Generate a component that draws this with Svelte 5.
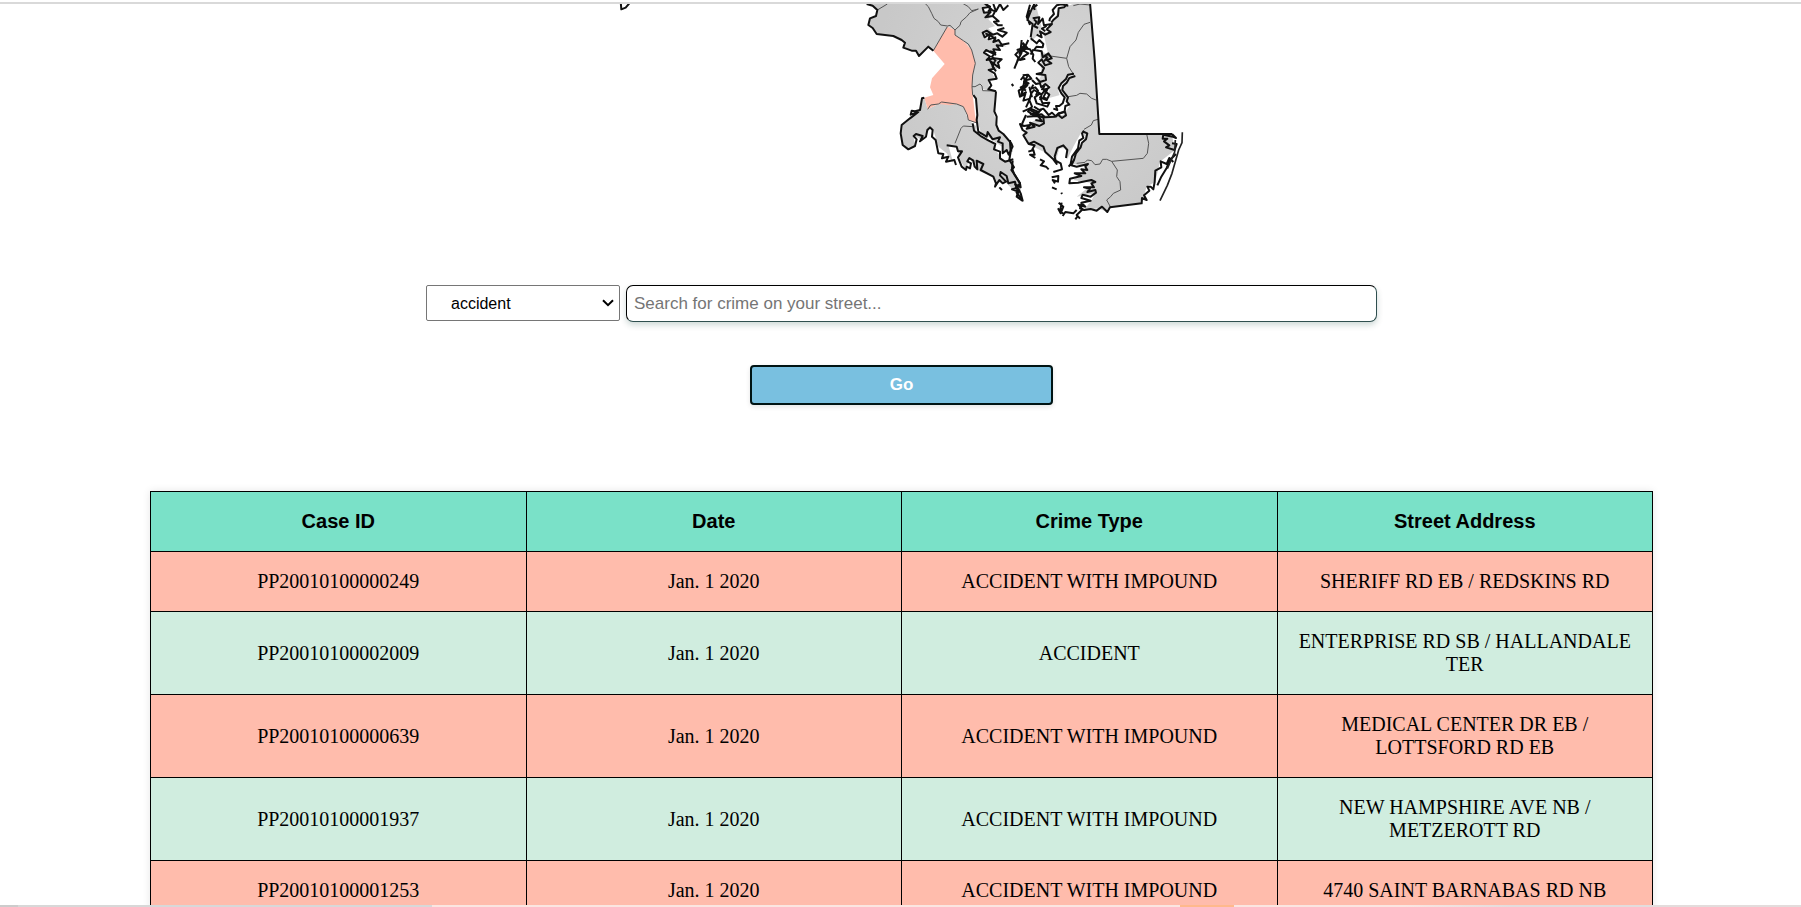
<script>
  const types = ['accident', 'assault', 'robbery', 'theft', 'vandalism'];
  const columns = ['Case ID', 'Date', 'Crime Type', 'Street Address'];
  const rows = [
    ['PP20010100000249', 'Jan. 1 2020', 'ACCIDENT WITH IMPOUND', 'SHERIFF RD EB / REDSKINS RD'],
    ['PP20010100002009', 'Jan. 1 2020', 'ACCIDENT', 'ENTERPRISE RD SB / HALLANDALE TER'],
    ['PP20010100000639', 'Jan. 1 2020', 'ACCIDENT WITH IMPOUND', 'MEDICAL CENTER DR EB / LOTTSFORD RD EB'],
    ['PP20010100001937', 'Jan. 1 2020', 'ACCIDENT WITH IMPOUND', 'NEW HAMPSHIRE AVE NB / METZEROTT RD'],
    ['PP20010100001253', 'Jan. 1 2020', 'ACCIDENT WITH IMPOUND', '4740 SAINT BARNABAS RD NB']
  ];
  let type = $state('accident');
  let street = $state('');
</script>

<div class="page">
  <div class="rule"></div>
  <main>
    <svg class="map" viewBox="-723 12 1695 678" aria-hidden="true">
      <defs>
        <radialGradient id="land" gradientUnits="userSpaceOnUse" cx="560" cy="240" r="520">
          <stop offset="0" stop-color="#d6d6d6" />
          <stop offset="1" stop-color="#c8c8c8" />
        </radialGradient>
      </defs>
      <!-- mainland counties -->
      <path class="fill" d="M20 5L38 17L52 30L48 48L30 55L25 75L38 84L50 102L100 108L125 120L135 128L130 143L155 152L168 152L177 168L205 140L220 152L262 80L285 90L285 105L310 122L335 150L346 190L338 225L336 260L388 272L385 240L405 235L390 210L410 210L415 180L385 175L372 155L415 150L410 135L440 140L420 125L375 115L368 100L405 105L385 85L405 78L385 58L400 45L375 40L370 20L395 5Z" />
      <path class="fill" d="M336 260L360 252L368 272L405 273L403 345L410 375L418 390L450 425L456 440L446 457L430 455L426 440L405 425L390 415L375 405L362 395L351 360L350 300L340 285Z" />
      <path class="fill" d="M193 293L203 328L235 312L290 312L310 320L325 360L348 378L350 395L380 420L405 435L410 455L430 480L458 482L456 505L470 530L480 550L486 600L460 570L435 545L405 550L400 530L355 512L328 475L318 510L300 480L290 440L265 435L280 490L260 460L235 440L220 390L212 382L200 400L185 420L160 405L165 435L145 448L128 435L122 400L125 375L150 350L180 330L185 295Z" />
      <path class="pink" d="M220 152L262 80L285 90L285 105L310 122L335 150L346 190L338 225L336 260L338 285L340 300L345 345L350 370L325 360L322 345L310 320L290 312L270 316L235 312L203 328L193 293L220 285L210 262L216 235L254 192Z" />
      <!-- eastern shore -->
      <path class="fill" d="M525 5L502 60L518 72L512 125L545 95L568 80L577 55L600 12L690 5L704 180L718 402L935 402L945 450L900 485L886 545L860 560L845 610L750 622L740 635L715 625L670 632L695 600L705 580L650 590L700 550L640 540L675 510L680 500L630 490L660 450L675 410L665 395L640 440L622 478L618 445L598 445L590 475L540 450L500 430L490 400L510 370L550 345L610 345L630 315L600 285L565 295L570 255L530 250L545 225L540 150L565 165L555 120Z" />
      <path class="water" d="M600 8L640 12L595 27L588 48L540 92L565 98L570 60L578 35ZM642 222L610 250L600 275L624 310L612 342L590 342L606 310L594 270L606 243L635 222Z" />
      <!-- county boundaries -->
      <path class="border" d="M52 30L82 12M190 5L205 20L215 40L222 55L235 65L242 75L262 78L270 76L285 90L300 76L303 65L320 50L330 38L355 27L335 32L325 20L308 10M285 90L285 105L310 122L325 132L335 150L346 190L338 225L336 260L338 285M220 152L262 80M336 260L345 260L360 252L366 258L368 272L405 273M203 328L212 315L235 312L245 306L290 312L310 320L322 345L325 360L348 368M285 430L303 385L310 378L338 380M690 67L672 73L655 97L648 120L630 140L620 175L626 200L640 222M550 165L585 170L620 175M625 290L650 286L660 280L680 282L695 295L708 300M714 358L700 362L694 375L672 388M860 402L866 430L862 460L850 475L755 484M650 490L675 487L682 480L695 482L705 494L720 492L728 478L740 478L755 484L772 510L770 530L780 545L782 570L760 580L752 590L740 600L752 622M640 17L660 12L690 15" />
      <!-- coastlines -->
      <path class="coast" d="M-718 4L-716 28L-703 23L-692 10M20 12L38 17L52 30L48 48L30 55L25 75L38 84L50 102L100 108L125 120L135 128L130 143L155 152L168 152L177 168L205 140L220 152M193 293L186 295L180 330L165 334L155 332L152 344L175 336L150 355L125 375L122 400L128 435L145 448L165 438L170 418L161 408L168 402L188 408L180 424L198 410L202 390L210 382L218 390L216 410L227 420L235 460L250 462L246 475L265 470L258 485L283 480L288 495M260 436L290 440L294 454L306 454L294 472L305 500L318 510L320 500L330 505L333 490L322 484L328 474L340 482L344 500L352 508L350 482L370 492L362 510L400 530L408 550L405 560L418 540L428 550L438 545L420 526L422 516L440 528L445 550L465 545L470 565L456 568L475 575L470 590L487 602M458 482L456 505L464 525L480 550L482 562L465 552L476 575" />
      <path class="coast" d="M340 285L348 296L352 345L350 360L355 395L380 410L383 396L398 418L420 412L414 425L428 430L428 460L440 450L446 464L458 440L454 430L430 402L416 392L409 375L410 350L403 334L406 300L408 274M338 370L342 392L365 410L386 422L406 432L402 448L420 455L420 475L435 485L460 478" />
      <path class="coast" d="M370 8L390 20L368 24L372 38L392 36L376 52L398 48L416 64L402 65L414 76L428 76M400 12L408 34L420 12L430 30L445 16M386 26L405 34L398 48M433 84L414 90L440 98L427 110L412 100L398 104L380 92L368 98L374 112L390 102L386 118L406 112L400 126L416 120L425 134L448 130M430 138L410 136L420 150L400 148L406 164L378 150L372 158L390 170L380 180L402 175L425 178L414 188L418 204L390 182L402 206L386 210L404 220L410 236L386 240L394 256L385 268L408 274" />
      <path class="coast" d="M510 14L500 50L510 75M485 120L482 148L466 164L476 174L463 206M488 128L502 144L488 150L505 160L490 170L480 180L496 176M525 8L514 30L502 60L518 72L512 112M532 14L522 22L524 30M518 55L538 52L534 72L548 56L552 76L576 72L560 88L572 96L556 104L540 94L545 112L530 104M512 115L530 130L538 120L550 132L548 142L530 140L522 150L545 154L548 172L565 160L575 175L560 180L574 190L555 196L545 178L535 188L552 204L546 218L530 222L556 225L558 240L540 246L528 232" />
      <path class="coast" d="M625 17L604 13L590 16L578 30L582 42L570 55L568 64M622 12L612 22L596 25L594 48L580 60L574 68M642 221L624 224L618 237L604 250L596 264L604 280L614 292L608 310L598 318L588 318L592 330L580 326M646 228L628 234L620 248L609 258L607 270L624 292L620 304L628 314L616 318L614 334L596 342L588 350L576 338L566 345L550 326L538 330L522 320" />
      <path class="coast" d="M488 226L504 224L514 236L500 240L496 260L476 272L480 290L496 282L490 302L510 296L498 322M482 240L490 230L496 244L506 250L482 262L498 272M516 240L528 252L540 250L544 262L556 252L568 262L552 272L568 284L560 300L540 292L548 310L568 308L562 320L530 310L524 292L540 280L522 270L514 280L508 300L516 320L504 334L520 345M470 150L490 145L510 148L520 164L518 176L526 186M546 280L540 300M556 270L542 286M508 260L516 292" />
      <path class="coast" d="M488 335L510 325L535 336L520 345L545 343L555 352L585 350L595 340L615 336L618 346L606 354L595 345M500 350L530 348L550 352L552 370L538 378L510 368L524 380L500 386L510 375L492 378L480 372L488 390L500 398L490 406L506 432L524 436L516 450M506 432L522 425L550 440L556 456L580 478L590 492L584 470L592 444L610 436L622 450L618 474M580 478L602 490L606 508L580 516" />
      <path class="coast" d="M672 392L666 400L670 414L658 422L654 445L636 470L632 492L626 500M672 396L682 400L678 418L666 428L662 442L648 460L642 480L634 496L650 500L684 492L676 500L682 510L664 508L676 520L644 520L664 528L630 536L628 550L654 548L694 540L706 546L694 550L702 562L672 562L690 566L682 576L706 570L708 578L692 590L668 584L664 594L692 602L664 608L676 620L655 614L668 628L650 645L660 656" />
      <path class="coast" d="M665 610L660 625L672 630L692 627L710 632L726 620L742 636L750 622L845 610L846 594L860 600L852 586L868 572L862 560L872 560L880 568L884 546L886 512L904 502L902 484L920 492L928 474L940 486M936 402L948 414L938 410L910 404L908 416L922 416L912 424L928 436L918 442L944 450L950 432L936 430M892 556L904 530L920 504L930 480L948 462" />
      <path class="state" d="M690 8L704 180L718 402L936 402" />
      <path class="thin" d="M967 397L966 428L956 450L936 520L922 556L900 602M946 420L944 456L922 506" />
      <!-- marshes and small islands -->
      <path class="islet" d="M454 455L450 420M450 425L452 455L448 480L462 502L454 510L468 530L480 550L472 560L482 580L488 602L470 578L478 575L466 560M505 455L520 450L524 464L510 464L526 474M540 478L552 484L542 496L558 500L566 508M575 532L595 528L594 545L578 540L585 550M576 562L590 568M596 608L610 620L602 640L594 625M605 608L600 634L612 642M604 578L606 582M608 648L616 636L640 640L650 630M652 650L646 658M498 345L486 372M503 48L508 30M486 138L478 164M494 240L484 286M488 130L497 148M455 252L460 258M505 120L488 155M520 148L512 164M544 328L530 344M418 562L426 570" />
      <path class="islet" d="M490 138L484 160L472 182M504 226L492 246L502 256L488 270L484 284L500 276M520 254L514 266L526 262L534 272L528 286M554 258L546 268L562 268L556 280L550 292L560 296M510 330L530 340L512 342L536 350L546 364L526 360M378 14L394 28L384 34M376 100L394 108L408 118M390 154L406 158L396 170L408 184M404 184L398 200L408 214M560 78L546 86L556 94M552 168L562 172L552 184M522 58L530 66L522 78L534 84" />
    </svg>

    <form onsubmit={(e) => e.preventDefault()}>
      <div class="fields">
        <select aria-label="Crime type" bind:value={type}>
          {#each types as t}<option>{t}</option>{/each}
        </select>
        <input type="text" aria-label="Street" placeholder="Search for crime on your street..." bind:value={street} />
      </div>
      <button type="submit">Go</button>
    </form>

    <table>
      <thead>
        <tr>{#each columns as c}<th scope="col">{c}</th>{/each}</tr>
      </thead>
      <tbody>
        {#each rows as row}
          <tr>{#each row as cell}<td>{cell}</td>{/each}</tr>
        {/each}
      </tbody>
    </table>
  </main>
  <div class="footer-edge"></div>
</div>

<style>
  :global(body) { margin: 0; background: #fff; }
  .page { height: 100vh; display: flex; flex-direction: column; overflow: hidden; padding-top: 2px; box-sizing: border-box; }
  .rule { flex: none; height: 2px; background: #d9d9d9; }
  main { flex: 1; min-height: 0; overflow: hidden; display: flex; flex-direction: column; align-items: center; padding-left: 2px; }
  .map { flex: none; width: 565px; height: 226px; }
  .fill { fill: url(#land); }
  .pink { fill: #ffbcac; }
  .water { fill: #fff; }
  .border, .coast, .state, .thin, .islet { fill: none; stroke-linejoin: round; }
  .border { stroke: #555; stroke-width: 3; }
  .coast { stroke: #111; stroke-width: 6; }
  .state { stroke: #111; stroke-width: 6; }
  .thin { stroke: #222; stroke-width: 5; }
  .islet { stroke: #111; stroke-width: 6; }

  form { flex: none; width: 100%; margin: 55px 0 86px; display: flex; flex-direction: column; align-items: center; gap: 43px; }
  .fields { width: 100%; display: flex; justify-content: center; gap: 6px; }
  select, input, button { box-sizing: border-box; font-family: "Liberation Sans", Arial, sans-serif; font-size: 16px; }
  select {
    appearance: none;
    width: 194px;
    height: 36px;
    padding: 0 24px;
    border: 1px solid #767676;
    border-radius: 2px;
    background: #fff url("data:image/svg+xml,%3Csvg xmlns='http://www.w3.org/2000/svg' width='12' height='8'%3E%3Cpath d='M1 1.2L6 6.2L11 1.2' fill='none' stroke='%23000' stroke-width='2'/%3E%3C/svg%3E") no-repeat right 5px center;
    color: #000;
  }
  input { width: 751px; height: 37px; padding: 0 7px; font-size: 17px; border: 1px solid #2f4f4f; border-top-color: #000; border-left-color: #000; border-radius: 7px; background: #fff; box-shadow: 0 3px 6px rgba(0, 60, 50, 0.2); }
  input::placeholder { color: #757575; }
  button { width: 303px; height: 40px; padding: 0; border: 2px solid #001414; border-radius: 4px; background: #79c0e0; color: #fff; font-size: 17px; font-weight: 700; box-shadow: 0 2px 5px rgba(0, 0, 0, 0.1); }

  table { width: 1503px; max-width: 84%; flex: none; table-layout: fixed; border-collapse: collapse; text-align: center; box-shadow: 0 0 8px rgba(0, 0, 0, 0.1); }
  th, td { border: 1px solid #000; padding: 18px; font-size: 20px; line-height: 23px; color: #000; }
  th { background: #7ae1c8; font-family: "Liberation Sans", Arial, sans-serif; font-weight: 700; }
  td { font-family: "Liberation Serif", "Times New Roman", serif; }
  tbody tr:nth-child(odd) { background: #ffbcac; }
  tbody tr:nth-child(even) { background: #d0eddf; }
  .footer-edge { flex: none; height: 2px; background: linear-gradient(90deg, #ccc 0 1%, #d8d8d8 1% 24%, #fbe6e1 24% 65.5%, #ffb98c 65.5% 68.5%, #fbe6e1 68.5% 78%, #e3dcdc 84%); }
</style>
